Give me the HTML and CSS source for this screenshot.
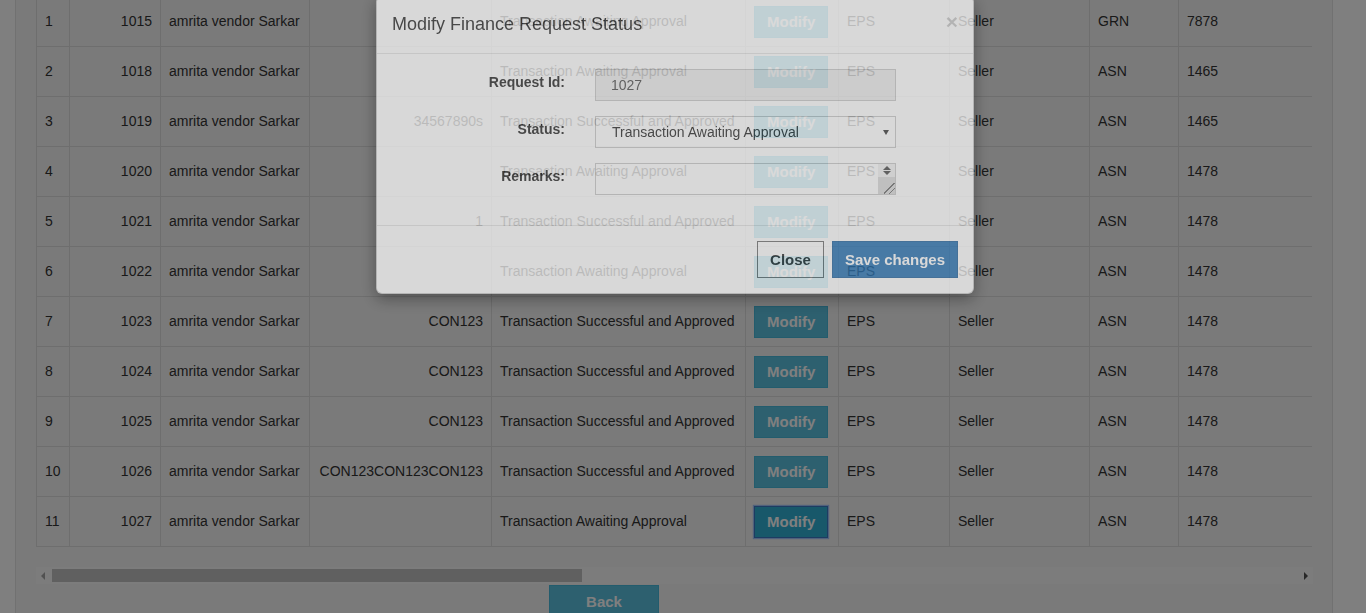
FILE: index.html
```html
<!DOCTYPE html>
<html lang="en">
<head>
<meta charset="utf-8">
<title>Finance Requests</title>
<link rel="stylesheet" href="styles.css">
</head>
<body>
<div class="page">
  <div class="well">
    <div class="table-scroll">
      <table class="grid">
        <colgroup>
          <col class="c1"><col class="c2"><col class="c3"><col class="c4"><col class="c5">
          <col class="c6"><col class="c7"><col class="c8"><col class="c9"><col class="c10">
        </colgroup>
        <tbody>
          <tr><td>1</td><td class="num">1015</td><td>amrita vendor Sarkar</td><td class="num"></td><td>Transaction Awaiting Approval</td><td><button class="btn btn-info">Modify</button></td><td>EPS</td><td>Seller</td><td>GRN</td><td>7878</td></tr>
          <tr><td>2</td><td class="num">1018</td><td>amrita vendor Sarkar</td><td class="num"></td><td>Transaction Awaiting Approval</td><td><button class="btn btn-info">Modify</button></td><td>EPS</td><td>Seller</td><td>ASN</td><td>1465</td></tr>
          <tr><td>3</td><td class="num">1019</td><td>amrita vendor Sarkar</td><td class="num">34567890s</td><td>Transaction Successful and Approved</td><td><button class="btn btn-info">Modify</button></td><td>EPS</td><td>Seller</td><td>ASN</td><td>1465</td></tr>
          <tr><td>4</td><td class="num">1020</td><td>amrita vendor Sarkar</td><td class="num"></td><td>Transaction Awaiting Approval</td><td><button class="btn btn-info">Modify</button></td><td>EPS</td><td>Seller</td><td>ASN</td><td>1478</td></tr>
          <tr><td>5</td><td class="num">1021</td><td>amrita vendor Sarkar</td><td class="num">1</td><td>Transaction Successful and Approved</td><td><button class="btn btn-info">Modify</button></td><td>EPS</td><td>Seller</td><td>ASN</td><td>1478</td></tr>
          <tr><td>6</td><td class="num">1022</td><td>amrita vendor Sarkar</td><td class="num"></td><td>Transaction Awaiting Approval</td><td><button class="btn btn-info">Modify</button></td><td>EPS</td><td>Seller</td><td>ASN</td><td>1478</td></tr>
          <tr><td>7</td><td class="num">1023</td><td>amrita vendor Sarkar</td><td class="num">CON123</td><td>Transaction Successful and Approved</td><td><button class="btn btn-info">Modify</button></td><td>EPS</td><td>Seller</td><td>ASN</td><td>1478</td></tr>
          <tr><td>8</td><td class="num">1024</td><td>amrita vendor Sarkar</td><td class="num">CON123</td><td>Transaction Successful and Approved</td><td><button class="btn btn-info">Modify</button></td><td>EPS</td><td>Seller</td><td>ASN</td><td>1478</td></tr>
          <tr><td>9</td><td class="num">1025</td><td>amrita vendor Sarkar</td><td class="num">CON123</td><td>Transaction Successful and Approved</td><td><button class="btn btn-info">Modify</button></td><td>EPS</td><td>Seller</td><td>ASN</td><td>1478</td></tr>
          <tr><td>10</td><td class="num">1026</td><td>amrita vendor Sarkar</td><td class="num">CON123CON123CON123</td><td>Transaction Successful and Approved</td><td><button class="btn btn-info">Modify</button></td><td>EPS</td><td>Seller</td><td>ASN</td><td>1478</td></tr>
          <tr><td>11</td><td class="num">1027</td><td>amrita vendor Sarkar</td><td class="num"></td><td>Transaction Awaiting Approval</td><td><button class="btn btn-info is-focused">Modify</button></td><td>EPS</td><td>Seller</td><td>ASN</td><td>1478</td></tr>
        </tbody>
      </table>
    </div>
    <div class="hscroll">
      <div class="hs-btn"><span class="tri-left"></span></div>
      <div class="hs-thumb"></div>
      <div class="hs-fill"></div>
      <div class="hs-btn"><span class="tri-right"></span></div>
    </div>
    <div class="actions">
      <button class="btn btn-info btn-back">Back</button>
    </div>
  </div>
</div>

<div class="backdrop"></div>

<div class="modal">
  <div class="modal-header">
    <h4 class="modal-title">Modify Finance Request Status</h4>
    <span class="close">&times;</span>
  </div>
  <div class="modal-body">
    <div class="form-grid">
      <div class="form-label">Request Id:</div>
      <div class="control readonly">1027</div>
      <div class="form-label">Status:</div>
      <div class="control select"><span>Transaction Awaiting Approval</span><span class="caret"></span></div>
      <div class="form-label">Remarks:</div>
      <div class="control textarea">
        <div class="ta-text"></div>
        <div class="ta-bar">
          <div class="ta-arrows"><span class="tri-up"></span><span class="tri-down"></span></div>
          <div class="ta-track"><span class="grip"></span></div>
        </div>
      </div>
    </div>
  </div>
  <div class="modal-footer">
    <button class="btn btn-default">Close</button>
    <button class="btn btn-primary">Save changes</button>
  </div>
</div>
</body>
</html>
```

FILE: styles.css
```css
* { box-sizing: border-box; }

html, body {
  margin: 0;
  height: 100%;
  overflow: hidden;
}

body {
  font-family: "Liberation Sans", Arial, Helvetica, sans-serif;
  font-size: 14px;
  line-height: 1.42857;
  color: #333;
  background: #fff;
}

.page {
  padding: 0 33px 0 15px;
  margin-top: -5px;
}

.well {
  background: #f5f5f5;
  border: 1px solid #e3e3e3;
  padding: 0 20px;
  min-height: 700px;
}

.table-scroll {
  overflow: hidden;
}

.grid {
  border-collapse: collapse;
  table-layout: fixed;
  width: 3000px;
}

.grid .c1 { width: 33px; }
.grid .c2 { width: 91px; }
.grid .c3 { width: 149px; }
.grid .c4 { width: 182px; }
.grid .c5 { width: 254px; }
.grid .c6 { width: 93px; }
.grid .c7 { width: 111px; }
.grid .c8 { width: 140px; }
.grid .c9 { width: 89px; }

.grid tr { height: 50px; }

.grid td {
  border: 1px solid #ddd;
  padding: 0 8px;
  vertical-align: middle;
  white-space: nowrap;
  overflow: hidden;
}

.grid td.num { text-align: right; }

.btn {
  display: inline-block;
  font-family: "Liberation Sans", Arial, sans-serif;
  font-size: 15px;
  font-weight: bold;
  line-height: 20px;
  padding: 5px 12px;
  border: 1px solid transparent;
  border-radius: 0;
  color: #fff;
  cursor: pointer;
  white-space: nowrap;
}

.btn-info {
  background: #5bc0de;
  border-color: #46b8da;
}

.btn-info.is-focused {
  background: #31b0d5;
  border-color: #3a78c4;
  box-shadow: 0 0 1px 1px rgba(77, 144, 254, 0.5);
}

.hscroll {
  margin-top: 20px;
  height: 17px;
  width: 1277px;
  background: #f8f8f8;
  display: flex;
  align-items: center;
}

.hs-btn {
  width: 16px;
  height: 17px;
  display: flex;
  align-items: center;
  justify-content: center;
}

.tri-left {
  width: 0;
  height: 0;
  border-top: 4px solid transparent;
  border-bottom: 4px solid transparent;
  border-right: 4px solid #a3a3a3;
  margin-left: -2px;
}

.tri-right {
  width: 0;
  height: 0;
  border-top: 4px solid transparent;
  border-bottom: 4px solid transparent;
  border-left: 4px solid #505050;
  margin-right: -2px;
}

.hs-thumb {
  width: 530px;
  height: 13px;
  background: #c1c1c1;
}

.hs-fill { flex: 1; }

.actions {
  padding-left: 513px;
  padding-top: 1px;
}

.btn-back {
  padding: 6px 35px;
  width: 110px;
}

/* modal overlay */
.backdrop {
  position: fixed;
  inset: 0;
  background: rgba(0, 0, 0, 0.5);
}

.modal {
  position: fixed;
  left: 376px;
  top: -4px;
  width: 598px;
  opacity: 0.7;
  background: #fff;
  border: 1px solid rgba(0, 0, 0, 0.2);
  border-radius: 6px;
  box-shadow: 0 5px 15px rgba(0, 0, 0, 0.5);
}

.modal-header {
  padding: 15px;
  border-bottom: 1px solid #e5e5e5;
  display: flex;
  justify-content: space-between;
  align-items: flex-start;
}

.modal-title {
  margin: 0;
  font-size: 18px;
  font-weight: normal;
  line-height: 1.42857;
  color: #333;
}

.close {
  font-size: 21px;
  font-weight: bold;
  line-height: 1;
  color: #000;
  opacity: 0.2;
  margin-top: -1px;
}

.modal-body {
  padding: 15px 15px 30px;
}

.form-grid {
  display: grid;
  grid-template-columns: 173px 301px;
  column-gap: 30px;
  row-gap: 15px;
}

.form-label {
  text-align: right;
  font-weight: bold;
  padding-top: 3px;
  line-height: 20px;
  color: #333;
}

.control {
  height: 32px;
  border: 1px solid #ccc;
  background: #fff;
  color: #555;
  font-size: 14px;
  line-height: 30px;
}

.control.readonly {
  background: #eee;
  padding: 0 15px;
}

.control.select {
  display: flex;
  justify-content: space-between;
  align-items: center;
  padding: 0 6px 0 16px;
  color: #333;
}

.caret {
  width: 0;
  height: 0;
  border-top: 5px solid #444;
  border-left: 3px solid transparent;
  border-right: 3px solid transparent;
  margin-top: 1px;
}

.control.textarea {
  display: flex;
}

.ta-text { flex: 1; }

.ta-bar {
  width: 17px;
  display: flex;
  flex-direction: column;
}

.ta-arrows {
  height: 13px;
  background: #f2f2f2;
  display: flex;
  flex-direction: column;
  align-items: center;
  justify-content: center;
  gap: 1px;
}

.tri-up {
  width: 0;
  height: 0;
  border-bottom: 4px solid #555;
  border-left: 4px solid transparent;
  border-right: 4px solid transparent;
}

.tri-down {
  width: 0;
  height: 0;
  border-top: 4px solid #555;
  border-left: 4px solid transparent;
  border-right: 4px solid transparent;
}

.ta-track {
  flex: 1;
  background: #dcdcdc;
  display: flex;
  justify-content: flex-end;
  align-items: flex-end;
}

.grip {
  width: 11px;
  height: 11px;
  background: linear-gradient(135deg, transparent 0 45%, #777 45% 52%, transparent 52% 70%, #777 70% 77%, transparent 77%);
}

.modal-footer {
  padding: 15px;
  border-top: 1px solid #e5e5e5;
  display: flex;
  justify-content: flex-end;
  gap: 8px;
}

.modal-footer .btn {
  padding: 8px 12px;
  line-height: 19px;
}

.btn-default {
  background: #fff;
  border-color: #777;
  color: #333;
}

.btn-primary {
  background: #337ab7;
  border-color: #2e6da4;
  color: #fff;
}
```
